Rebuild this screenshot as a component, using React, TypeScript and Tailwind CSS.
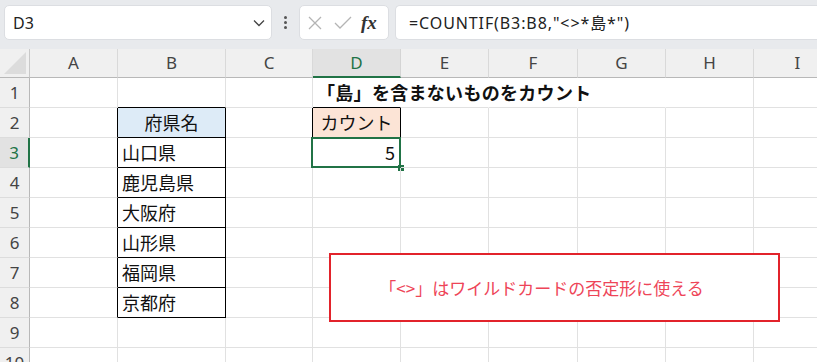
import React from 'react';

const COLS = ['A', 'B', 'C', 'D', 'E', 'F', 'G', 'H', 'I'];
const ROWS = [1, 2, 3, 4, 5, 6, 7, 8, 9, 10];

const PREFS: Record<number, string> = {
  2: '府県名',
  3: '山口県',
  4: '鹿児島県',
  5: '大阪府',
  6: '山形県',
  7: '福岡県',
  8: '京都府',
};

const FormulaBar = () => (
  <div className="h-[49px] bg-[#e8eaed] flex items-start pt-[5px]">
    <div className="ml-[4px] w-[268px] h-[35px] bg-white rounded-[5px] border border-[#dcdee2] flex items-center justify-between pl-[8px] pr-[6px]">
      <span className="text-[16px] text-[#222] font-['Noto_Sans',sans-serif]">D3</span>
      <svg width="12" height="8" viewBox="0 0 12 8">
        <path d="M1 1.5 L6 6.5 L11 1.5" fill="none" stroke="#444" strokeWidth="1.3" />
      </svg>
    </div>
    <div className="w-[27px] h-[35px] flex flex-col items-center justify-center gap-[2px]">
      <span className="w-[3px] h-[3px] bg-[#555] rounded-full" />
      <span className="w-[3px] h-[3px] bg-[#555] rounded-full" />
      <span className="w-[3px] h-[3px] bg-[#555] rounded-full" />
    </div>
    <div className="w-[90px] h-[35px] bg-white rounded-[5px] border border-[#dcdee2] flex items-center pl-[7px]">
      <svg width="16" height="16" viewBox="0 0 16 16">
        <path d="M2 2 L14 14 M14 2 L2 14" stroke="#b4b4b4" strokeWidth="1.3" />
      </svg>
      <svg width="20" height="16" viewBox="0 0 20 16" className="ml-[10px]">
        <path d="M2 8 L7 13 L18 2" fill="none" stroke="#b4b4b4" strokeWidth="1.3" />
      </svg>
      <span className="ml-[8px] text-[19px] italic font-bold text-[#333] font-['Liberation_Serif',serif] leading-none">fx</span>
    </div>
    <div className="ml-[6px] flex-1 h-[35px] bg-white rounded-l-[5px] border border-r-0 border-[#dcdee2] flex items-center pl-[13px]">
      <span className="text-[16px] text-[#222] font-['Noto_Sans','Noto_Sans_CJK_JP',sans-serif] tracking-[0.9px]">=COUNTIF(B3:B8,"&lt;&gt;*島*")</span>
    </div>
  </div>
);

const cellBorder = (col: string, row: number) => {
  const inB = col === 'B' && row >= 2 && row <= 8;
  const leftOfB = col === 'A' && row >= 2 && row <= 8;
  const aboveB = col === 'B' && row === 1;
  const isD2 = col === 'D' && row === 2;
  const leftOfD2 = col === 'C' && row === 2;
  const aboveD2 = col === 'D' && row === 1;
  const titleSpan = row === 1 && (col === 'D' || col === 'E' || col === 'F' || col === 'G');

  let right = 'border-r-[#e1e1e1]';
  let bottom = 'border-b-[#e1e1e1]';
  if (inB || leftOfB || isD2 || leftOfD2) right = 'border-r-black';
  if (titleSpan) right = 'border-r-transparent';
  if (inB || aboveB || isD2 || aboveD2) bottom = 'border-b-black';
  return `border-r border-b ${right} ${bottom}`;
};

const cellBg = (col: string, row: number) => {
  if (col === 'B' && row === 2) return 'bg-[#ddebf7]';
  if (col === 'D' && row === 2) return 'bg-[#fce4d6]';
  return '';
};

const Cell = ({ col, row }: { col: string; row: number }) => {
  let content: React.ReactNode = null;
  let align = 'justify-start pl-[4px]';

  if (col === 'B' && PREFS[row]) {
    content = PREFS[row];
    if (row === 2) align = 'justify-center';
  }
  if (col === 'D' && row === 1) {
    content = <span className="relative z-10 whitespace-nowrap font-bold tracking-[0.3px]">「島」を含まないものをカウント</span>;
  }
  if (col === 'D' && row === 2) {
    content = 'カウント';
    align = 'justify-center';
  }
  if (col === 'D' && row === 3) {
    content = '5';
    align = 'justify-end pr-[5px]';
  }

  return (
    <div className={`relative h-[30px] flex items-center ${align} ${cellBorder(col, row)} ${cellBg(col, row)} text-[18px] text-[#111] overflow-visible`}>
      {content}
      {col === 'D' && row === 3 && (
        <>
          <div className="absolute left-[-2px] top-[-1px] right-[-1px] bottom-[-1px] border-2 border-[#217346] pointer-events-none" />
          <div className="absolute right-[-4px] bottom-[-4px] w-[6px] h-[6px] bg-[#217346]" />
        </>
      )}
    </div>
  );
};

export default function App() {
  return (
    <div className="relative w-[817px] h-[362px] overflow-hidden bg-white font-['Noto_Sans_CJK_JP','Noto_Sans',sans-serif]">
      <FormulaBar />
      <div className="grid grid-cols-[30px_88px_108px_87px_88px_88px_89px_88px_88px_88px]">
        {/* header row */}
        <div className="h-[29px] bg-[#f0f0f0] border-r border-b border-r-[#c8c8c8] border-b-[#b8b8b8] relative overflow-hidden">
          <div className="absolute right-[3px] bottom-[3px] w-0 h-0 border-l-[22px] border-l-transparent border-b-[22px] border-b-[#dcdcdc]" />
        </div>
        {COLS.map((c) =>
          c === 'D' ? (
            <div key={c} className="h-[29px] bg-[#e2e2e2] border-r border-r-[#d4d4d4] border-b-2 border-b-[#217346] flex items-center justify-center text-[17px] text-[#217346] font-['Noto_Sans',sans-serif]">
              {c}
            </div>
          ) : (
            <div key={c} className="h-[29px] bg-[#f0f0f0] border-r border-r-[#d9d9d9] border-b border-b-[#b8b8b8] flex items-center justify-center text-[17px] text-[#444] font-['Noto_Sans',sans-serif]">
              {c}
            </div>
          )
        )}
        {ROWS.map((r) => (
          <React.Fragment key={r}>
            {r === 3 ? (
              <div className="h-[30px] bg-[#e2e2e2] border-b border-b-[#dcdcdc] border-r-2 border-r-[#217346] flex items-center justify-center text-[17px] text-[#217346] font-['Noto_Sans',sans-serif]">
                {r}
              </div>
            ) : (
              <div className="h-[30px] bg-[#f0f0f0] border-b border-b-[#dcdcdc] border-r border-r-[#b8b8b8] flex items-center justify-center text-[17px] text-[#444] font-['Noto_Sans',sans-serif]">
                {r}
              </div>
            )}
            {COLS.map((c) => (
              <Cell key={c} col={c} row={r} />
            ))}
          </React.Fragment>
        ))}
      </div>

      {/* callout shape floating over the sheet */}
      <div className="absolute left-[329px] top-[253px] w-[451px] h-[69px] bg-white border-2 border-[#e2232b] flex items-center justify-center pr-[26px]">
        <span className="text-[17px] text-[#ee4558]">「&lt;&gt;」はワイルドカードの否定形に使える</span>
      </div>
    </div>
  );
}
